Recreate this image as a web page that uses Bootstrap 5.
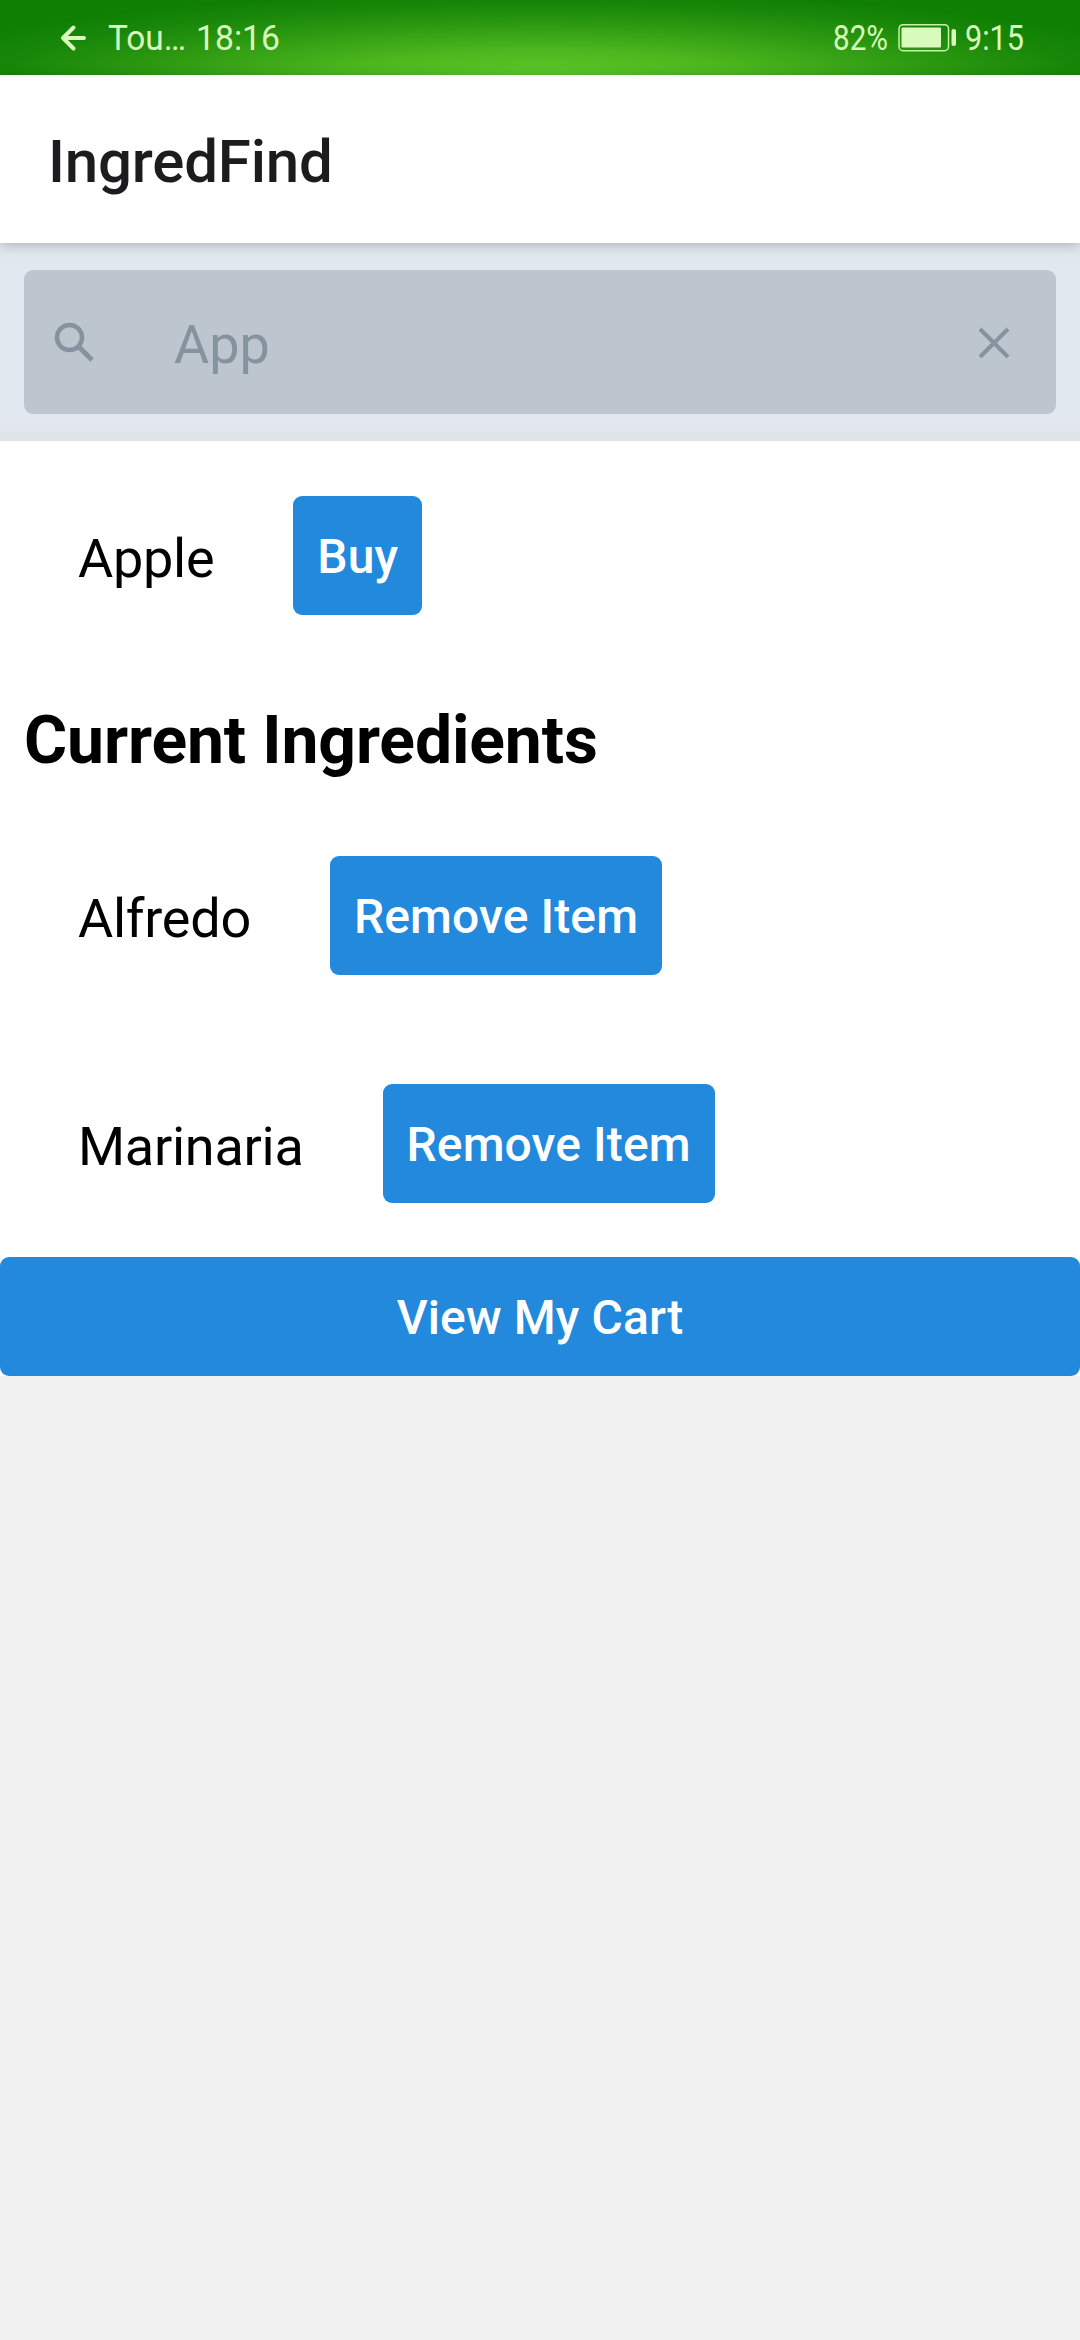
<!DOCTYPE html>
<html lang="en">
<head>
<meta charset="utf-8">
<meta name="viewport" content="width=device-width, initial-scale=1">
<title>IngredFind</title>
<link href="https://cdn.jsdelivr.net/npm/bootstrap@5.3.0/dist/css/bootstrap.min.css" rel="stylesheet">
<style>
body{font-family:Roboto,"Liberation Sans",sans-serif;background:#f1f1f1;color:#000;min-height:2340px;overflow:hidden}
.status-bar{height:75px;background:radial-gradient(ellipse 640px 86px at 50% 103%,#5fc828 0%,#4cb61e 32%,#2f9b12 60%,#188709 84%,#0f7f03 100%)}
.status-bar svg{display:block}
.status-bar text{font-family:Roboto,sans-serif;fill:#d8fbbd}
.title-bar{height:168px;padding:5px 48px 0;box-shadow:0 2px 12px rgba(0,0,0,.24);z-index:1}
.app-title{font-size:60px;font-weight:500;line-height:80px;letter-spacing:-.2px;color:#1c1c1e}
.search-wrap{height:198px;padding:27px 24px;background:linear-gradient(#e1e8ef 0 90%,#dfe2e5 100%)}
.search-box{height:144px;border-radius:9px;background:#bdc6cf;color:#86939e;padding:0 41px 0 28px}
.search-text{font-size:54px;line-height:72px;margin-left:78px;padding-top:5px}
.item-line{height:228px;padding:0 78px}
.item-name{font-size:54px;line-height:72px;letter-spacing:-.27px;margin-right:79px;padding-top:8px}
.btn-solid{--bs-btn-bg:#2289dc;--bs-btn-color:#fff;--bs-btn-hover-bg:#2289dc;--bs-btn-hover-color:#fff;--bs-btn-border-width:0;--bs-btn-border-radius:9px;--bs-btn-padding-x:24px;--bs-btn-padding-y:0;--bs-btn-font-size:48px;--bs-btn-font-weight:500;height:119px;line-height:119px;padding-top:1px;letter-spacing:.12px}
.section-head{height:132px;padding:6px 24px 0;font-size:66px;font-weight:700;line-height:132px;letter-spacing:-.12px}
</style>
</head>
<body>
<div class="status-bar d-flex justify-content-between">
  <svg width="340" height="75">
    <path d="M84 38H63M73.500 27.500L63 38L73.500 48.500" fill="none" stroke="#d8fbbd" stroke-width="4" stroke-linecap="round" stroke-linejoin="round"/>
    <text x="108" y="50" font-size="34.500" textLength="78" lengthAdjust="spacingAndGlyphs">Tou…</text>
    <text x="196" y="50" font-size="34.500" textLength="84" lengthAdjust="spacingAndGlyphs">18:16</text>
  </svg>
  <svg width="270" height="75">
    <text x="23" y="50" font-size="34.500" textLength="55" lengthAdjust="spacingAndGlyphs">82%</text>
    <rect x="89" y="24.700" width="49.500" height="26" rx="4" fill="none" stroke="#c5f3a8" stroke-width="1.500"/>
    <rect x="91.500" y="27.500" width="39.500" height="20" rx="1" fill="#d8fbbd"/>
    <rect x="141.500" y="29" width="4.500" height="17" rx="2" fill="#d8fbbd"/>
    <text x="155" y="50" font-size="34.500" textLength="59" lengthAdjust="spacingAndGlyphs">9:15</text>
  </svg>
</div>
<header class="title-bar bg-white d-flex align-items-center position-relative">
  <h1 class="app-title mb-0">IngredFind</h1>
</header>
<section class="search-wrap">
  <div class="search-box d-flex align-items-center">
    <svg width="44" height="44" viewBox="0 0 44 44"><circle cx="17.500" cy="17.500" r="12.500" fill="none" stroke="#86939e" stroke-width="4.500"/><path d="M27.500 27.500L40 40" stroke="#86939e" stroke-width="5"/></svg>
    <span class="search-text flex-grow-1">App</span>
    <svg width="42" height="42" viewBox="0 0 42 42"><path d="M7 8L35 36M35 8L7 36" stroke="#86939e" stroke-width="4"/></svg>
  </div>
</section>
<main class="bg-white">
  <div class="item-line d-flex align-items-center"><span class="item-name">Apple</span><button class="btn btn-solid">Buy</button></div>
  <h2 class="section-head mb-0">Current Ingredients</h2>
  <div class="item-line d-flex align-items-center"><span class="item-name">Alfredo</span><button class="btn btn-solid">Remove Item</button></div>
  <div class="item-line d-flex align-items-center"><span class="item-name">Marinaria</span><button class="btn btn-solid">Remove Item</button></div>
  <button class="btn btn-solid w-100 d-block">View My Cart</button>
</main>
<script src="https://cdn.jsdelivr.net/npm/bootstrap@5.3.0/dist/js/bootstrap.bundle.min.js"></script>
</body>
</html>
